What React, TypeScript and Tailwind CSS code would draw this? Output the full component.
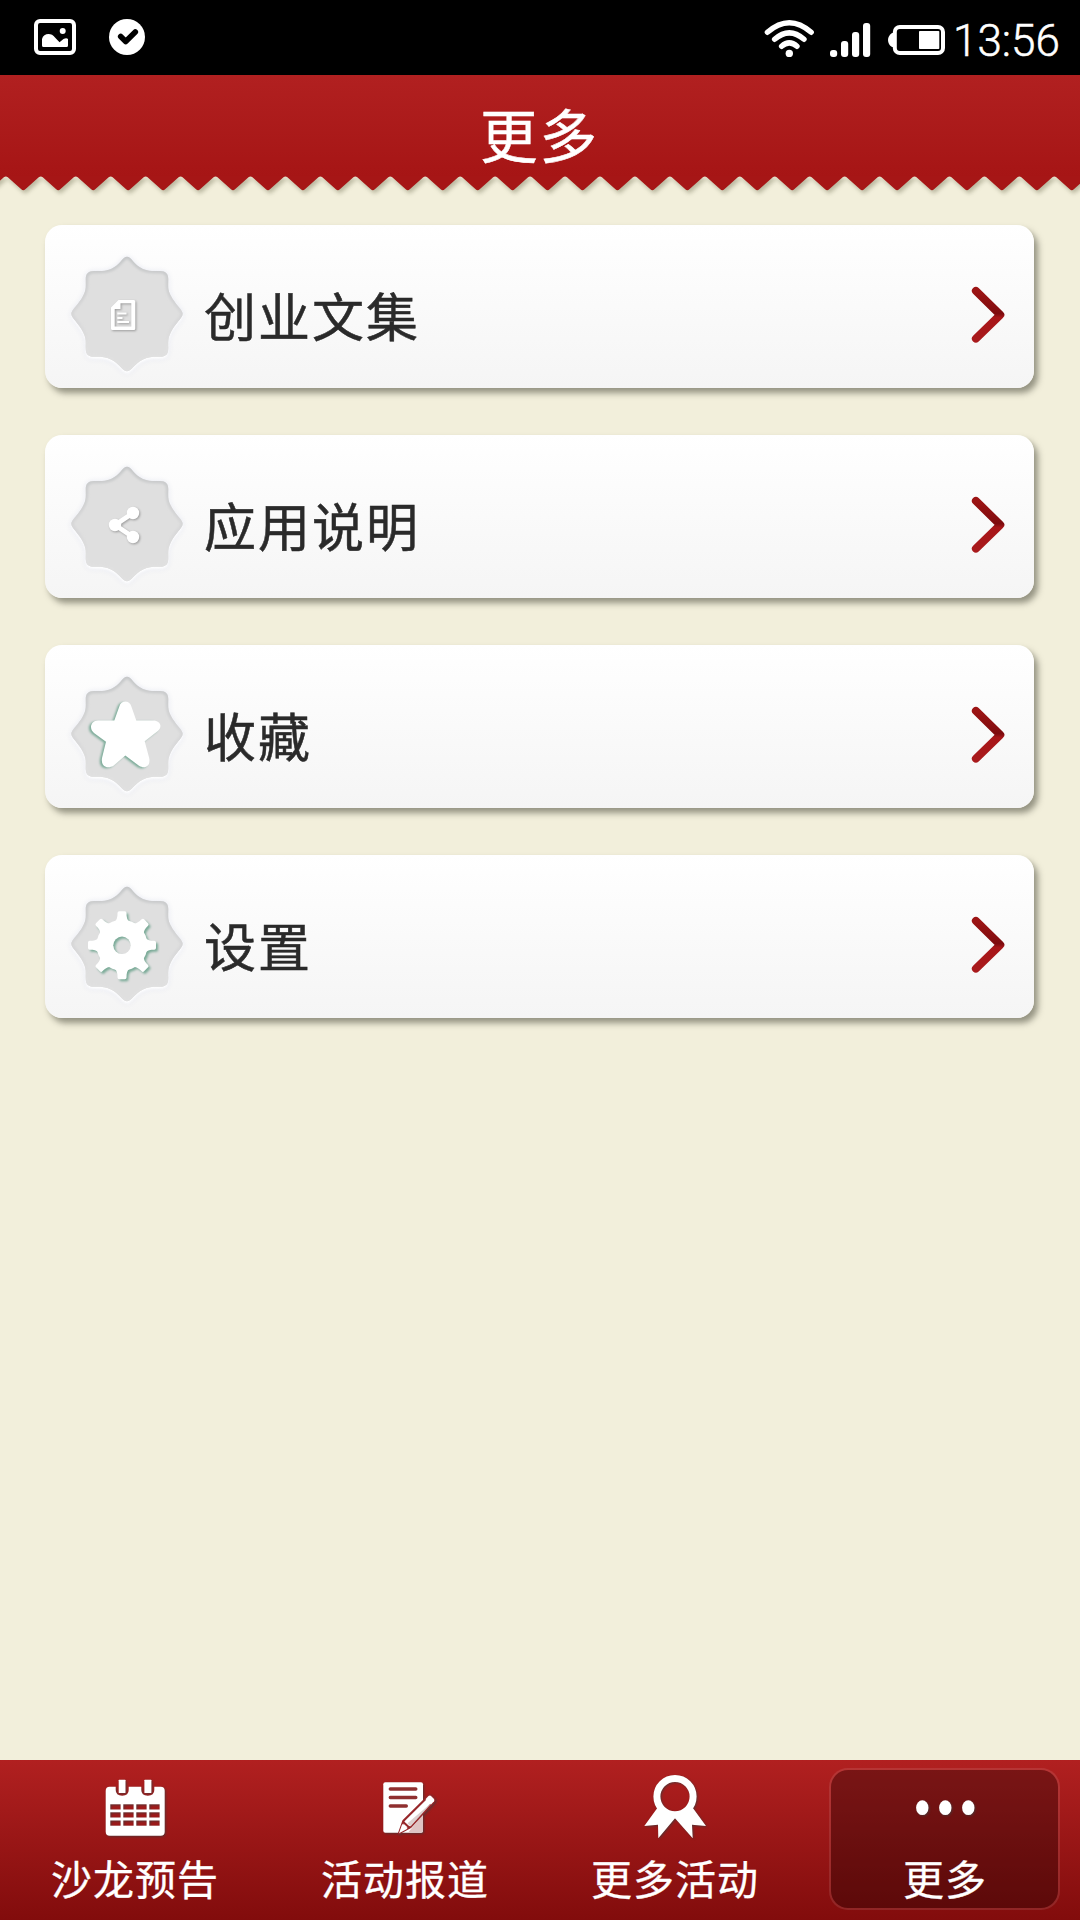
import React from 'react';

interface MenuItem {
    id: string;
    label: string;
    glyph: React.ReactNode;
}

interface TabItem {
    id: string;
    label: string;
    icon: React.ReactNode;
}

const BADGE_PATH =
    'M60 4.7C64.5 4.7 67 13 76 17C82 19.5 87 19 93 19C99 19 101.3 22 101.3 27C101.3 34 100.5 38 104 44C108 52 115.7 58 115.7 61.7C115.7 66 108 71.5 104 80C100.5 87 101.3 90 101.3 96C101.3 102 99 104.8 93 104.8C87 104.8 82 104.5 76 107.5C67 112 64.5 119.3 60 119.3C55.5 119.3 53 112 44 107.5C38 104.5 33 104.8 27 104.8C21 104.8 18.7 102 18.7 96C18.7 90 19.5 87 16 80C12 71.5 4.3 66 4.3 61.7C4.3 58 12 52 16 44C19.5 38 18.7 34 18.7 27C18.7 22 21 19 27 19C33 19 38 19.5 44 17C53 13 55.5 4.7 60 4.7Z';

const gearAngles = [0, 45, 90, 135, 180, 225, 270, 315];

const menuItems: MenuItem[] = [
    {
        id: 'articles',
        label: '创业文集',
        glyph: (
            <g className="[filter:drop-shadow(1px_1px_1px_rgba(0,0,0,0.3))]">
                <path
                    fillRule="evenodd"
                    d="M51.5 48H66.8Q68.3 48 68.3 49.5V76.5Q68.3 78 66.8 78H45.5Q44 78 44 76.5V55.5ZM53.5 51.3V57H47.7V74.4H64.3V51.3Z"
                />
                <path d="M50.3 60.6H59.5V62.6H50.3ZM50.3 65H55.5V67H50.3ZM50.3 69H62V71H50.3Z" />
            </g>
        ),
    },
    {
        id: 'about',
        label: '应用说明',
        glyph: (
            <g className="[filter:drop-shadow(1px_1px_1px_rgba(0,0,0,0.3))]">
                <path d="M66 51L48 63L66 75" fill="none" stroke="#fff" strokeWidth="4.6" />
                <circle cx="48" cy="63" r="6.2" />
                <circle cx="66" cy="51" r="6.2" />
                <circle cx="66" cy="75" r="6.2" />
            </g>
        ),
    },
    {
        id: 'favorites',
        label: '收藏',
        glyph: (
            <path
                className="[filter:drop-shadow(-2px_1.5px_1px_#7bab98)]"
                d="M52.3 34.5C54 27.8 62.6 27.8 64.4 34.5L69.3 48.4H86C93.5 48.4 96 55 90.5 59.3L77.7 69.3L82.2 86C84 94 78 97.5 72 93.8L58.3 83.6L46.5 93.8C40 97.5 33.5 94 35 86L39 69.8L27 61C21.500 56.500 24 48.400 31 48.400H47.300Z"
            />
        ),
    },
    {
        id: 'settings',
        label: '设置',
        glyph: (
            <g className="[filter:drop-shadow(2.5px_2px_1px_#7bab98)]">
                <mask id="gear-hole">
                    <rect width="120" height="124" fill="#fff" />
                    <circle cx="55" cy="63.3" r="8.7" fill="#000" />
                </mask>
                <g mask="url(#gear-hole)">
                    <circle cx="55" cy="63.3" r="25.5" />
                    {gearAngles.map((angle) => (
                        <path
                            key={angle}
                            transform={`rotate(${angle} 55 63.3)`}
                            d="M47.5 40C50 38 50.5 35 50.5 31Q50.5 29.3 52.2 29.3H57.8Q59.5 29.3 59.5 31C59.5 35 60 38 62.5 40Z"
                        />
                    ))}
                </g>
            </g>
        ),
    },
];

const tabItems: TabItem[] = [
    {
        id: 'salon',
        label: '沙龙预告',
        icon: (
            <>
                <mask id="calendar-cutouts">
                    <rect width="80" height="72" fill="#fff" />
                    <g fill="#000">
                        <path d="M20.7 10H33.7V18Q33.7 23.7 27.2 23.7Q20.7 23.7 20.7 18Z" />
                        <path d="M46.3 10H59.3V18Q59.3 23.7 52.8 23.7Q46.3 23.7 46.3 18Z" />
                        {[32.3, 40.3, 48.5].map((y) =>
                            [15.3, 28.3, 41.3, 54.3].map((x) => (
                                <rect key={`${x}-${y}`} x={x} y={y} width="10.3" height="5.2" />
                            ))
                        )}
                    </g>
                </mask>
                <rect x="10.7" y="14.7" width="59" height="49" rx="4" mask="url(#calendar-cutouts)" />
                <rect x="23.7" y="7.7" width="6.8" height="13.2" rx="0.5" />
                <rect x="49.4" y="7.7" width="7" height="13.2" rx="0.5" />
            </>
        ),
    },
    {
        id: 'reports',
        label: '活动报道',
        icon: (
            <>
                <rect x="18.3" y="10.2" width="39.7" height="50.5" rx="2" />
                <path d="M58 42V58.7Q58 60.7 56 60.7H43Z" fill="#dfc3c3" />
                <path d="M25.3 17H50.8M25.3 25.5H50.8M25.3 34H41.3" stroke="#8f2f2f" strokeWidth="3.4" strokeLinecap="round" />
                <path
                    d="M63.5 24Q65 23 66 24L69 27Q69.7 28.2 69 29.3L45.5 55L34 61.3L38.5 48.7Z"
                    fill="#fff"
                    stroke="#97272a"
                    strokeWidth="2.2"
                    strokeLinejoin="round"
                />
                <path d="M68.3 29.3L45.5 54.5L42.5 51.3Z" fill="#ddd0d0" />
                <path d="M37.7 49.5L44.8 56" stroke="#97272a" strokeWidth="2" />
                <path d="M63.5 24Q65 23 66 24L69 27Q69.7 28.2 69 29.3L66 32.5L60.5 27.2Z" />
                <path d="M34 61.3L37.2 52L42.5 56.8Z" />
            </>
        ),
    },
    {
        id: 'activities',
        label: '更多活动',
        icon: (
            <>
                <circle cx="40" cy="24.6" r="18.1" fill="none" stroke="#fff" strokeWidth="7" />
                <path d="M22.5 35.8L9.3 54L23 52.7L23.3 66.3L40 46.3L57.7 66.3L57 52.7L71 54L57.7 35.8Q51 43 40 43Q29 43 22.5 35.8Z" />
            </>
        ),
    },
    {
        id: 'more',
        label: '更多',
        icon: (
            <>
                <ellipse cx="17.3" cy="35.7" rx="6.2" ry="7.4" />
                <ellipse cx="40.3" cy="35.7" rx="6.2" ry="7.4" />
                <ellipse cx="63.3" cy="35.7" rx="6.2" ry="7.4" />
            </>
        ),
    },
];

// Zigzag edge: teeth are 34.95px apart, the first tip sits at x = 23.3
const TOOTH = 34.95;
const teethPath =
    'M-12 -1' +
    Array.from({ length: 33 }, (_, i) => {
        const tip = 23.3 + (i - 1) * TOOTH;
        return `L${tip - 2} 13.2Q${tip} 15.2 ${tip + 2} 13.2L${tip + TOOTH / 2 - 2} 1.2Q${tip + TOOTH / 2} 0 ${tip + TOOTH / 2 + 2} 1.2`;
    }).join('') +
    'V-1Z';

function StatusBar() {
    return (
        <div className="h-[75px] bg-black flex items-start text-white">
            <svg className="w-[180px] h-[75px]" viewBox="0 0 180 75" fill="#fff">
                <rect x="36" y="21" width="38" height="32" rx="4" fill="none" stroke="#fff" strokeWidth="4" />
                <circle cx="62.7" cy="31" r="3" />
                <path d="M42 39C43.5 33 51.5 32.5 55 37.5L59.5 42.3L63.5 39Q66.5 37.3 68 39V45.5Q68 47 66.5 47H43.5Q42 47 42 45.5Z" />
                <circle cx="127" cy="37" r="18" />
                <path d="M120.7 36.5L125.7 41.5L135.3 32" fill="none" stroke="#000" strokeWidth="5.6" strokeLinecap="round" strokeLinejoin="round" />
            </svg>
            <svg className="ml-auto w-[190px] h-[75px]" viewBox="760 0 190 75" fill="#fff">
                <g fill="none" stroke="#fff" strokeWidth="5.4" strokeLinecap="round">
                    <path d="M767.4 32.3Q789.3 13.2 811.2 32.3" />
                    <path d="M774.6 39.3Q789.3 26.4 804 39.3" />
                    <path d="M781.6 46.3Q789.3 39.5 797 46.3" />
                </g>
                <circle cx="789.3" cy="53.4" r="3.7" />
                <rect x="830" y="50" width="7.2" height="7" rx="3" />
                <rect x="841" y="41" width="7.2" height="16" rx="3" />
                <rect x="852" y="32" width="7.2" height="25" rx="3" />
                <rect x="863" y="23" width="7.2" height="34" rx="3" />
                <rect x="894.8" y="27" width="48.2" height="26" rx="5" fill="none" stroke="#fff" strokeWidth="4" />
                <path d="M894 33H892Q888 36 888 40Q888 44.5 892 47H894Z" />
                <rect x="919" y="31" width="20.3" height="18" rx="0.8" />
            </svg>
            <span className="w-[130px] pl-[3px] pt-[15px] font-['Roboto'] font-light text-[44px] leading-[52px] whitespace-nowrap [-webkit-text-stroke:0.5px_white]">
                13:56
            </span>
        </div>
    );
}

function Header() {
    return (
        <header className="h-[135px]">
            <div className="h-[101px] bg-linear-to-b from-[#b12020] to-[#a61515] flex items-center justify-center">
                <h1 className="pt-[14px] pr-px text-[57.5px] leading-[80px] tracking-[2px] text-white [-webkit-text-stroke:0.5px_white]">
                    更多
                </h1>
            </div>
            <svg
                className="block w-[1080px] h-[20px] overflow-visible [filter:drop-shadow(2px_3px_2px_rgba(80,80,50,0.35))] [clip-path:inset(0_0_-12px_0)]"
                viewBox="0 0 1080 20"
            >
                <path className="[filter:blur(0.7px)]" d={teethPath} fill="#a61616" />
            </svg>
        </header>
    );
}

function Badge({ children }: { children: React.ReactNode }) {
    return (
        <svg className="mt-[14px] w-[120px] h-[124px] shrink-0 overflow-visible" viewBox="0 0 120 124">
            <defs>
                <linearGradient id="badge-edge" x1="0" y1="0" x2="0" y2="1">
                    <stop offset="0" stopColor="#c6c8c9" />
                    <stop offset="0.5" stopColor="#d6d6d7" />
                    <stop offset="0.8" stopColor="#e0e0e0" />
                </linearGradient>
                <clipPath id="badge-shape">
                    <path d={BADGE_PATH} />
                </clipPath>
                <filter id="badge-soft">
                    <feGaussianBlur stdDeviation="1.3" />
                </filter>
            </defs>
            <path
                className="[filter:drop-shadow(0_2.5px_1px_#fff)_drop-shadow(0_0_2.5px_#e6e8f2)]"
                d={BADGE_PATH}
                fill="#dfdfdf"
            />
            <g clipPath="url(#badge-shape)">
                <path d={BADGE_PATH} fill="none" stroke="url(#badge-edge)" strokeWidth="5" filter="url(#badge-soft)" />
            </g>
            <g fill="#fff">{children}</g>
        </svg>
    );
}

function MenuRow({ item }: { item: MenuItem }) {
    return (
        <li className="h-[163px] rounded-[17px] bg-linear-to-b from-white to-[#f5f5f5] shadow-[4px_5px_6px_rgba(75,75,60,0.56)] flex items-center pl-[22px] pr-[27px]">
            <Badge>{item.glyph}</Badge>
            <span className="ml-[17px] pt-[16px] text-[52px] leading-[72px] tracking-[2px] text-[#2a2a2a] [-webkit-text-stroke:0.5px_#2a2a2a]">
                {item.label}
            </span>
            <svg className="ml-auto mt-[16px] w-[38px] h-[60px]" viewBox="0 0 38 60">
                <defs>
                    <linearGradient id="chevron" x1="0" y1="0" x2="0" y2="1">
                        <stop offset="0" stopColor="#9c1414" />
                        <stop offset="0.48" stopColor="#7f0b0e" />
                        <stop offset="0.56" stopColor="#a81619" />
                        <stop offset="1" stopColor="#a91a1c" />
                    </linearGradient>
                </defs>
                <path
                    d="M6.9 5.9L31.3 29.8L6.9 53.6"
                    fill="none"
                    stroke="url(#chevron)"
                    strokeWidth="8"
                    strokeLinecap="round"
                    strokeLinejoin="round"
                />
            </svg>
        </li>
    );
}

function TabBar({ activeId }: { activeId: string }) {
    return (
        <nav className="h-[160px] bg-linear-to-b from-[#b12020] to-[#820c0c] grid grid-cols-4">
            {tabItems.map((tab) => (
                <div
                    key={tab.id}
                    className={`mt-[8px] ml-[19px] w-[231px] h-[142px] rounded-[19px] border-2 pt-[2px] flex flex-col items-center text-white ${
                        tab.id === activeId ? 'border-white/10 bg-black/30 bg-clip-padding' : 'border-transparent'
                    }`}
                >
                    <svg
                        className="w-[80px] h-[72px] shrink-0 [filter:drop-shadow(1.5px_1.5px_1px_rgba(60,60,60,0.7))]"
                        viewBox="0 0 80 72"
                        fill="#fff"
                    >
                        {tab.icon}
                    </svg>
                    <span className="mt-[8px] pl-px text-[41px] leading-[50px] tracking-[1px] whitespace-nowrap [-webkit-text-stroke:0.3px_white]">
                        {tab.label}
                    </span>
                </div>
            ))}
        </nav>
    );
}

export default function App() {
    return (
        <div className="w-[1080px] h-[1920px] overflow-hidden bg-[#f2efdb] flex flex-col font-['Noto_Sans_CJK_SC',sans-serif]">
            <StatusBar />
            <Header />
            <main className="flex-1 pt-[15px] pl-[45px] pr-[46px]">
                <ul className="flex flex-col gap-[47px]">
                    {menuItems.map((item) => (
                        <MenuRow key={item.id} item={item} />
                    ))}
                </ul>
            </main>
            <TabBar activeId="more" />
        </div>
    );
}
